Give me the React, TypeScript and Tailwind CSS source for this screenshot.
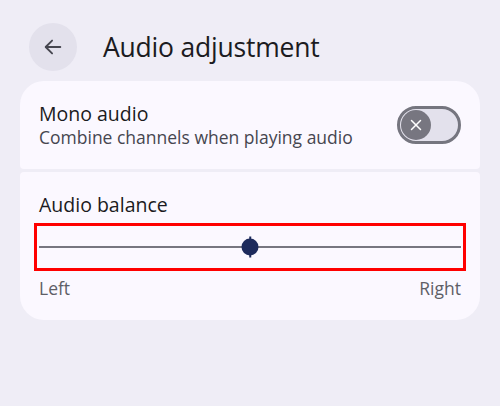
import { X } from "lucide-react";

export default function App() {
  return (
    <div className="h-[406px] w-[500px] overflow-hidden bg-[#efedf6] font-['Open_Sans',sans-serif] text-[#1b1b21]">
      <div className="flex items-center gap-[26px] px-[29px] pt-[23px]">
        <button className="flex h-[48px] w-[48px] items-center justify-center rounded-full bg-[#e3e1ec] text-[#46464f]">
          <svg width="22" height="22" viewBox="0 0 24 24" fill="none" stroke="currentColor" strokeWidth="2" strokeLinecap="round" strokeLinejoin="round">
            <path d="M20 12H4.5" />
            <path d="M11 5l-7 7 7 7" />
          </svg>
        </button>
        <h1 className="text-[26.5px] leading-[30px] tracking-[-0.2px]">Audio adjustment</h1>
      </div>

      <div className="mx-[20px] mt-[10px] flex flex-col gap-[3px]">
        <div className="flex h-[88px] items-center justify-between rounded-t-[24px] rounded-b-[4px] bg-[#fbf8ff] pl-[19px] pr-[19px]">
          <div className="flex flex-col">
            <span className="text-[19.5px] leading-[25px]">Mono audio</span>
            <span className="text-[17.5px] leading-[23px] text-[#46464f]">Combine channels when playing audio</span>
          </div>
          <div className="flex h-[38px] w-[64px] items-center rounded-full border-[3px] border-[#75757f] bg-[#e3e1ec] pl-[1px]">
            <div className="flex h-[30px] w-[30px] items-center justify-center rounded-full bg-[#777680] text-white">
              <X size={18} strokeWidth={2} />
            </div>
          </div>
        </div>

        <div className="flex h-[148px] flex-col rounded-t-[4px] rounded-b-[24px] bg-[#fbf8ff] px-[14px] pt-[20px]">
          <span className="pl-[5px] text-[19.5px] leading-[25px]">Audio balance</span>
          <div className="mt-[6px] flex h-[48px] items-center border-[3px] border-[#ff0000] px-[2px]">
            <div className="relative h-[2px] w-full bg-[#777680]">
              <div className="absolute left-1/2 top-1/2 h-[21px] w-[1.5px] -translate-x-1/2 -translate-y-1/2 bg-[#1d2a5c]" />
              <div className="absolute left-1/2 top-1/2 h-[17px] w-[17px] -translate-x-1/2 -translate-y-1/2 rounded-full bg-[#1d2a5c]" />
            </div>
          </div>
          <div className="mt-[6px] flex justify-between px-[5px] text-[17.5px] leading-[22px] text-[#5e5e66]">
            <span>Left</span>
            <span>Right</span>
          </div>
        </div>
      </div>
    </div>
  );
}
